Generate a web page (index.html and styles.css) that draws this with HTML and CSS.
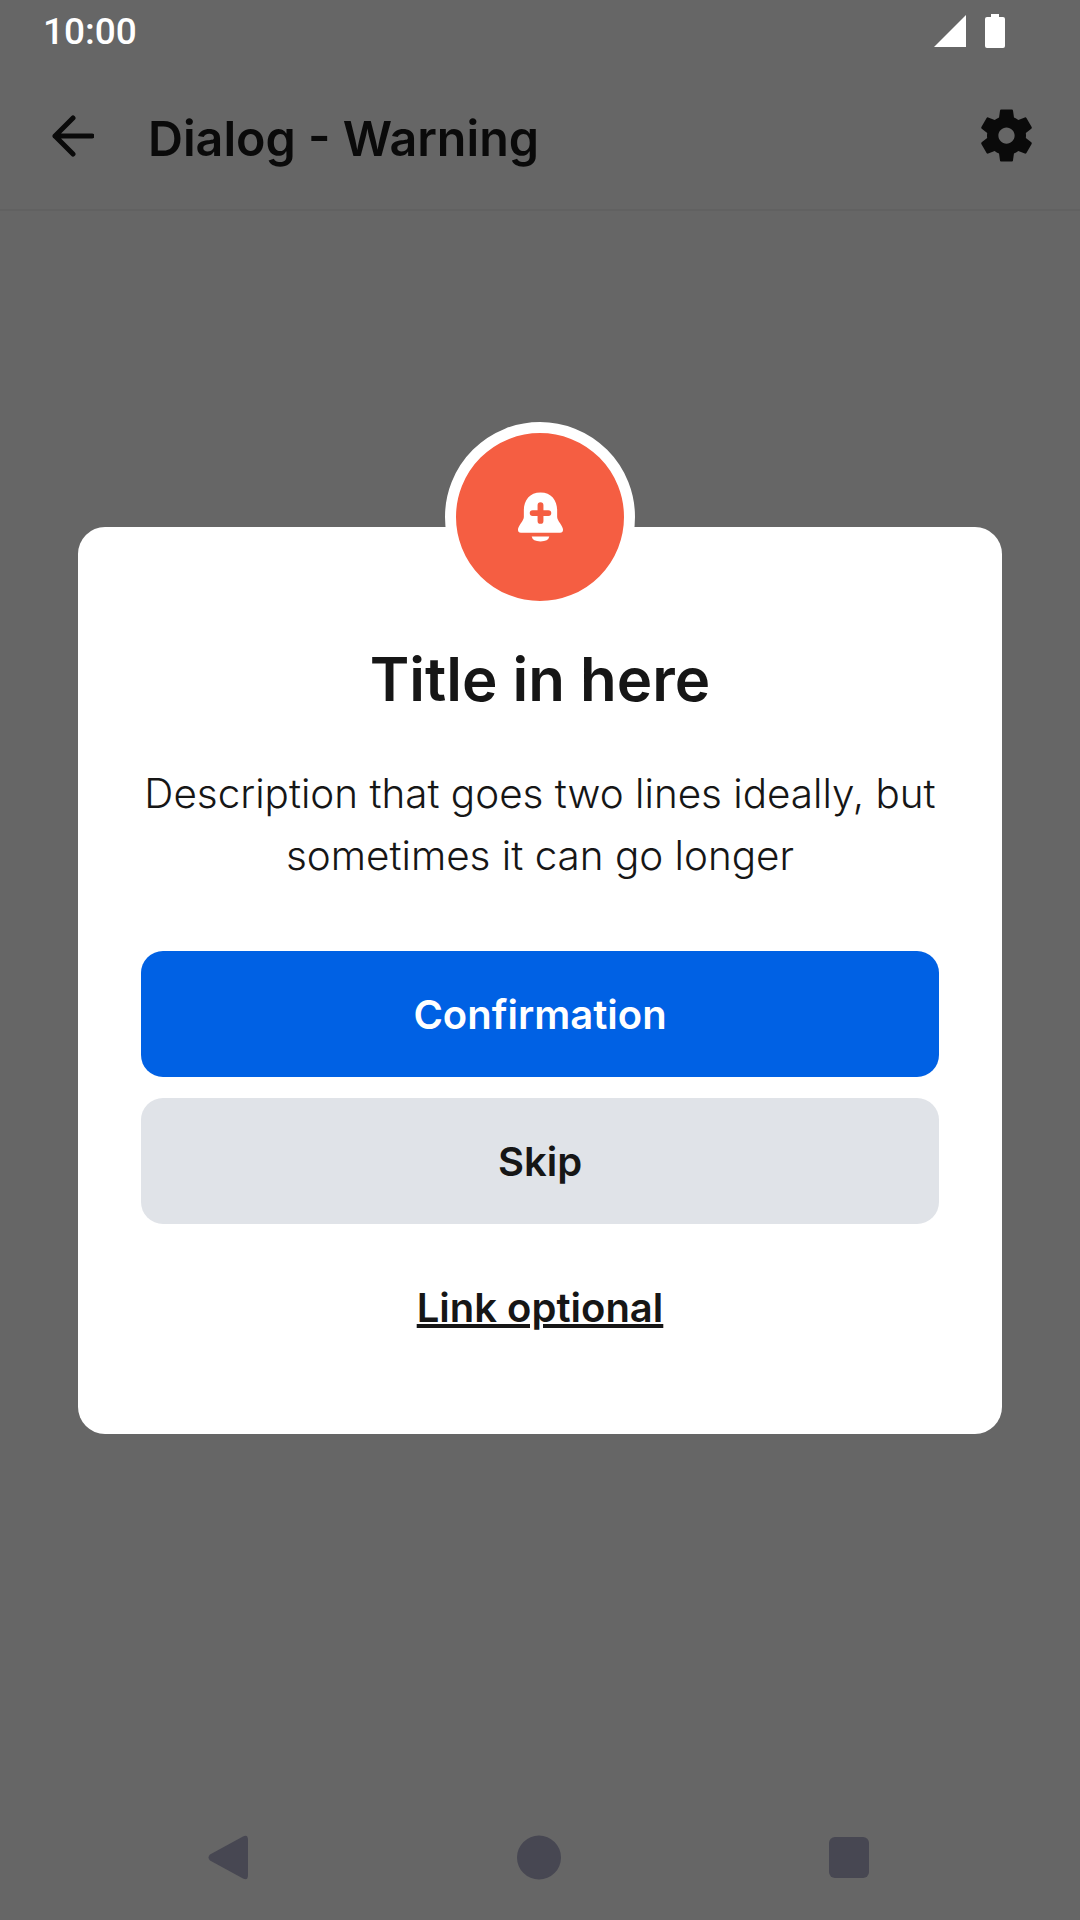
FILE: index.html
```html
<!DOCTYPE html>
<html lang="en">
<head>
    <meta charset="UTF-8">
    <title>Dialog - Warning</title>
    <link rel="stylesheet" href="styles.css">
</head>
<body>
    <div class="screen">
        <!-- Status bar -->
        <div class="status-bar">
            <span class="clock">10:00</span>
            <div class="status-icons">
                <svg class="signal" width="32" height="32" viewBox="0 0 32 32"><path d="M32 0V32H0Z"/></svg>
                <svg class="battery" width="20" height="34" viewBox="0 0 20 34"><path d="M6 0H14V3H18Q20 3 20 5V32Q20 34 18 34H2Q0 34 0 32V5Q0 3 2 3H6Z"/></svg>
            </div>
        </div>

        <!-- App bar -->
        <header class="app-bar">
            <svg class="back-icon" width="42" height="42" viewBox="0 0 42 42"><path d="M40 21H3M21 3L3 21L21 39"/></svg>
            <h1 class="app-title">Dialog - Warning</h1>
            <svg class="gear-icon" width="65" height="65" viewBox="0 0 24 24"><path d="M19.14 12.94c.04-.3.06-.61.06-.94 0-.32-.02-.64-.07-.94l2.03-1.58c.18-.14.23-.41.12-.61l-1.92-3.32c-.12-.22-.37-.29-.59-.22l-2.39.96c-.5-.38-1.03-.7-1.62-.94l-.36-2.54c-.04-.24-.24-.41-.48-.41h-3.84c-.24 0-.43.17-.47.41l-.36 2.54c-.59.24-1.13.57-1.62.94l-2.39-.96c-.22-.08-.47 0-.59.22L2.74 8.87c-.12.21-.08.47.12.61l2.03 1.58c-.05.3-.09.63-.09.94s.02.64.07.94l-2.03 1.58c-.18.14-.23.41-.12.61l1.92 3.32c.12.22.37.29.59.22l2.39-.96c.5.38 1.03.7 1.62.94l.36 2.54c.05.24.24.41.48.41h3.84c.24 0 .44-.17.47-.41l.36-2.54c.59-.24 1.13-.56 1.62-.94l2.39.96c.22.08.47 0 .59-.22l1.92-3.32c.12-.22.07-.47-.12-.61l-2.01-1.58zM12 15c-1.65 0-3-1.35-3-3s1.35-3 3-3 3 1.35 3 3-1.35 3-3 3z"/></svg>
        </header>

        <!-- Dialog -->
        <main class="content">
            <section class="dialog">
                <div class="badge">
                    <svg width="47" height="52" viewBox="0 0 48 52">
                        <path class="bell" d="M24 1C13 1 7 9 7 19V26C7 30 1 35 1 39Q1 42 4 42H44Q47 42 47 39C47 35 41 30 41 26V19C41 9 35 1 24 1Z"/>
                        <path class="bell" d="M15 46H33Q32 51 24 51Q16 51 15 46Z"/>
                        <path class="bell-plus" d="M24 14V30M16 22H32"/>
                    </svg>
                </div>
                <h2 class="dialog-title">Title in here</h2>
                <p class="dialog-text">Description that goes two lines ideally, but sometimes it can go longer</p>
                <button class="btn btn-primary" type="button">Confirmation</button>
                <button class="btn btn-secondary" type="button">Skip</button>
                <a class="dialog-link" href="#">Link optional</a>
            </section>
        </main>

        <!-- Navigation bar -->
        <nav class="nav-bar">
            <svg width="40" height="45" viewBox="0 0 40 45"><path d="M35 1.5Q40 -1 40 5V40Q40 46 35 43.5L2 25.5Q-1 22.500 2 19.500Z"/></svg>
            <svg width="44" height="45" viewBox="0 0 44 45"><circle cx="22" cy="22.500" r="22"/></svg>
            <svg width="40" height="41" viewBox="0 0 40 41"><rect width="40" height="41" rx="6"/></svg>
        </nav>
    </div>
</body>
</html>
```
FILE: styles.css
```css
* { box-sizing: border-box; }
body { margin: 0; background-color: #666666; font-family: Inter, "Liberation Sans", sans-serif; }
.screen { display: flex; flex-direction: column; width: 1080px; height: 1920px; overflow: hidden; }

.status-bar { display: flex; justify-content: space-between; align-items: center; height: 62px; padding: 0 75px 0 43px; }
.clock { font-family: Roboto, sans-serif; font-size: 37px; font-weight: 500; color: #ffffff; }
.status-icons { display: flex; align-items: center; gap: 19px; }
.status-icons svg { fill: #ffffff; }

.app-bar { display: flex; align-items: center; height: 149px; padding: 0 41px 0 52px; border-bottom: 2px solid #616161; }
.back-icon { fill: none; stroke: #0a0a0a; stroke-width: 5; stroke-linecap: round; stroke-linejoin: round; }
.app-title { flex: 1; margin: 6px 0 0 54px; font-size: 48.4px; font-weight: 600; color: #0a0a0a; }
.gear-icon { fill: #0a0a0a; }

.content { flex: 1; padding: 316px 78px 0; }
.dialog { display: flex; flex-direction: column; align-items: center; height: 907px; padding: 0 63px; background-color: #ffffff; border-radius: 27px; }
.badge { display: flex; justify-content: center; align-items: center; width: 190px; height: 190px; margin-top: -105px; background-color: #f55e42; border: 11px solid #ffffff; border-radius: 50%; }
.bell { fill: #ffffff; }
.bell-plus { fill: none; stroke: #f55e42; stroke-width: 6; stroke-linecap: round; }

.dialog-title { margin: 32px 0 0; font-size: 60px; line-height: 70px; font-weight: 600; color: #161616; }
.dialog-text { margin: 49px 0 0; font-size: 40.4px; line-height: 62px; font-weight: 300; text-align: center; color: #161616; }

.btn { width: 100%; height: 126px; border: none; border-radius: 22px; font-family: inherit; font-size: 40px; font-weight: 600; }
.btn-primary { margin-top: 64px; background-color: #0061e4; color: #ffffff; }
.btn-secondary { margin-top: 21px; background-color: #e0e3e8; color: #161616; }
.dialog-link { margin-top: 59px; font-size: 40px; font-weight: 600; color: #161616; }

.nav-bar { display: flex; justify-content: space-between; align-items: center; height: 85px; padding: 0 211px 40px 208px; }
.nav-bar svg { fill: #474752; }
```
